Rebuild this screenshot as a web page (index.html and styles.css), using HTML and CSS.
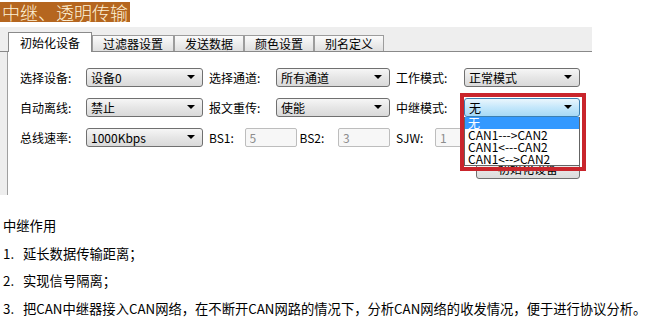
FILE: index.html
```html
<!DOCTYPE html>
<html lang="zh-CN">
  <head>
    <meta charset="UTF-8" />
    <meta name="viewport" content="width=device-width, initial-scale=1.0" />
    <title>中继、透明传输</title>
    <link rel="stylesheet" href="styles.css">
  </head>
  <body>
    <h2 class="title">中继、透明传输</h2>

    <div class="window">
      <ul class="tabs">
        <li class="tab active">初始化设备</li>
        <li class="tab">过滤器设置</li>
        <li class="tab">发送数据</li>
        <li class="tab">颜色设置</li>
        <li class="tab">别名定义</li>
      </ul>

      <div class="page">
        <div class="form">
          <span class="lbl">选择设备:</span>
          <div class="select">设备0</div>
          <span class="lbl">选择通道:</span>
          <div class="select">所有通道</div>
          <span class="lbl">工作模式:</span>
          <div class="select">正常模式</div>

          <span class="lbl">自动离线:</span>
          <div class="select">禁止</div>
          <span class="lbl">报文重传:</span>
          <div class="select">使能</div>
          <span class="lbl">中继模式:</span>
          <div class="select focus">无
            <!-- 展开的下拉列表 -->
            <ul class="droplist">
              <li class="hl">无</li>
              <li>CAN1---&gt;CAN2</li>
              <li>CAN1&lt;---CAN2</li>
              <li>CAN1&lt;--&gt;CAN2</li>
            </ul>
            <!-- 红框标注 -->
            <div class="mark"></div>
          </div>

          <span class="lbl">总线速率:</span>
          <div class="select">1000Kbps</div>
          <div class="pair">
            <span class="lbl">BS1:</span>
            <input class="field" type="text" value="5" disabled>
            <span class="lbl">BS2:</span>
            <input class="field" type="text" value="3" disabled>
          </div>
          <div class="pair">
            <span class="lbl sjw">SJW:</span>
            <input class="field" type="text" value="1" disabled>
          </div>

          <button class="btn">初始化设备</button>
        </div>
      </div>
    </div>

    <div class="notes">
      <p>中继作用</p>
      <p><span class="num">1.</span>延长数据传输距离；</p>
      <p><span class="num">2.</span>实现信号隔离；</p>
      <p><span class="num">3.</span>把CAN中继器接入CAN网络，在不断开CAN网路的情况下，分析CAN网络的收发情况，便于进行协议分析。</p>
    </div>
  </body>
</html>
```

FILE: styles.css
```css
* {
  box-sizing: border-box;
}
html,
body {
  margin: 0;
  padding: 0;
  background: #fff;
}
body {
  font-family: "Noto Sans CJK SC", "Noto Sans", sans-serif;
  color: #000;
}
.title {
  width: fit-content;
  margin: 2px 0 0;
  padding: 0 2px;
  height: 20px;
  line-height: 20px;
  font-size: 18px;
  font-weight: 300;
  color: #fdf1d6;
  background: #b5661f;
}
/* 窗口 */
.window {
  margin-top: 5px;
  width: 592px;
  background: #eeeeee;
}
.tabs {
  display: flex;
  align-items: flex-end;
  height: 25px;
  margin: 0;
  padding: 5px 0 0 8px;
  list-style: none;
  border-bottom: 1px solid #898989;
}
.tab {
  height: 16px;
  padding: 0 10px;
  border: 1px solid #9c9c9c;
  border-bottom: none;
  background: linear-gradient(#fbfbfb, #dfdfdf);
  font-size: 12px;
  line-height: 15px;
}
.tab.active {
  height: 20px;
  padding: 0 11px;
  margin-bottom: -1px;
  border-color: #8a8a8a;
  background: #fff;
  line-height: 19px;
}
.page {
  margin-left: 7px;
  padding: 16px 0 16px 6px;
  border-left: 1px solid #a0a0a0;
  background: #fff;
}
.form {
  display: grid;
  grid-template-columns: 72px 117px 73px 114px 74px 116px;
  grid-template-rows: 19px 19px 19px 21px;
  row-gap: 11px;
  align-items: center;
  font-size: 12px;
}
.lbl {
  padding-left: 6px;
  white-space: nowrap;
}
.select {
  position: relative;
  height: 19px;
  padding-left: 4px;
  border: 1px solid #707070;
  border-radius: 3px;
  background: linear-gradient(#f6f6f6, #e6e6e6 50%, #d9d9d9);
  line-height: 17px;
  white-space: nowrap;
}
.select::after {
  content: "";
  position: absolute;
  right: 7px;
  top: 6px;
  border: 4px solid transparent;
  border-top-color: #000;
  border-bottom: 0;
}
.select.focus {
  border-color: #3c7fb1;
  background: linear-gradient(#eaf6fd, #c4e7fb 50%, #a7d9f5);
}
.droplist {
  position: absolute;
  top: 18px;
  left: -1px;
  right: -1px;
  margin: 0;
  padding: 0;
  list-style: none;
  background: #fff;
  border: 1px solid #646464;
  border-top: none;
  z-index: 2;
}
.droplist li {
  height: 12px;
  padding-left: 3px;
  line-height: 12px;
  font-size: 12px;
}
.droplist .hl {
  background: #3399ff;
  color: #fff;
}
.mark {
  position: absolute;
  top: -6px;
  left: -5px;
  width: 126px;
  height: 78px;
  border: 4px solid #c9252c;
  z-index: 3;
}
.pair {
  grid-column: span 2;
  display: flex;
  align-items: center;
  height: 19px;
}
.pair .lbl {
  width: 42px;
}
.pair .field + .lbl {
  padding-left: 3px;
}
.pair .sjw {
  width: 45px;
}
.field {
  width: 52px;
  height: 19px;
  padding: 0 0 0 4px;
  border: 1px solid #bdbdbd;
  border-radius: 2px;
  background: #f7f7f7;
  color: #8d8d8d;
  font: inherit;
}
.btn {
  grid-column: 6;
  width: 104px;
  height: 21px;
  margin-left: 12px;
  padding: 0;
  border: 1px solid #707070;
  border-radius: 3px;
  background: linear-gradient(#f3f3f3, #dcdcdc);
  font: inherit;
  color: #000;
}
/* 说明文字 */
.notes {
  margin-top: 17px;
  padding-left: 3px;
  font-size: 13.3px;
  line-height: 27.5px;
}
.notes p {
  margin: 0;
  white-space: nowrap;
}
.num {
  display: inline-block;
  width: 20px;
}
```
